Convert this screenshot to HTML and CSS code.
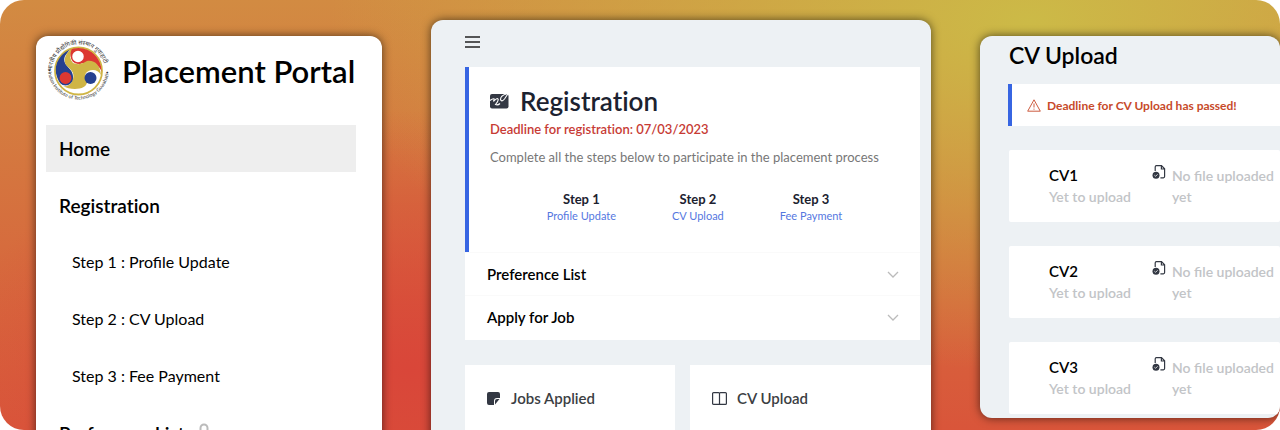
FILE: index.html
```html
<!DOCTYPE html>
<html lang="en">
<head>
<meta charset="utf-8">
<meta name="viewport" content="width=device-width, initial-scale=1">
<title>Placement Portal</title>
<link rel="stylesheet" href="styles.css">
</head>
<body>
<svg class="defs" aria-hidden="true">
  <symbol id="chevron" viewBox="0 0 12 7"><path d="M1 1l5 5 5-5" fill="none" stroke="currentColor" stroke-width="1.3"/></symbol>
  <symbol id="file-done" viewBox="0 0 14 14">
    <path d="M3.2 6V1.9Q3.2.7 4.4.7H9.5L12.6 3.8V11.6Q12.6 12.8 11.4 12.8H8.4M9.4.9V4H12.5" fill="none" stroke="currentColor" stroke-width="1.2"/>
    <circle cx="4" cy="10.2" r="3.5" fill="currentColor"/>
    <path d="M2.4 10.2l1.2 1.1 2-2" fill="none" stroke="#fff" stroke-width=".8"/>
  </symbol>
</svg>
<main class="stage">
  <aside class="panel sidebar">
    <header class="brand">
      <svg class="crest" viewBox="0 0 64 64" role="img" aria-label="Indian Institute of Technology Guwahati">
        <defs>
          <clipPath id="disc"><circle cx="32.500" cy="32" r="23"/></clipPath>
          <path id="arc-top" d="M6 32A26.500 26.500 0 0 1 59 32"/>
          <path id="arc-bottom" d="M2 30A30.500 30.500 0 0 0 63 30"/>
        </defs>
        <circle cx="32.500" cy="32" r="23.500" fill="#fff" stroke="#cfb545" stroke-width="1.800"/>
        <g clip-path="url(#disc)">
          <path d="M25 9C12 13 7 27 11 38C14 47 27 48 27 38C27 28 15 27 19 17Z" fill="#25408f"/>
          <path d="M24 8C42 5 56 18 56 33C51 23 44 22 34 25C27 25 22 17 25 9Z" fill="#dc3832"/>
          <path d="M26 9C19 15 17 21 20 26C24 30 29 33 27 40C25 46 21 48 17 47C25 52 42 51 41 42C37 36 40 31 47 31Q52 31 55 36C54 26 49 21 41 22Q34 27 27 24Q22 19 26 9Z" fill="#cfb545"/>
        </g>
        <circle cx="32" cy="17.500" r="6.500" fill="#fff" stroke="#dc3832" stroke-width="1.500"/>
        <circle cx="19.500" cy="39" r="6.700" fill="#dc3832" stroke="#25408f" stroke-width="1.500"/>
        <circle cx="44.500" cy="39" r="6" fill="#25408f"/>
        <text class="crest-text hindi"><textPath href="#arc-top">भारतीय प्रौद्योगिकी संस्थान गुवाहाटी</textPath></text>
        <text class="crest-text"><textPath href="#arc-bottom">•Indian Institute of Technology Guwahati•</textPath></text>
      </svg>
      <h1>Placement Portal</h1>
    </header>
    <nav class="menu">
      <a class="item active" href="#home">Home</a>
      <a class="item" href="#registration">Registration</a>
      <a class="item sub" href="#step1">Step 1 : Profile Update</a>
      <a class="item sub" href="#step2">Step 2 : CV Upload</a>
      <a class="item sub" href="#step3">Step 3 : Fee Payment</a>
      <a class="item" href="#preferences">Preference List
        <svg class="lock" viewBox="0 0 16 22"><path d="M4.500 8V5a3.500 3.500 0 0 1 7 0V8" fill="none" stroke="currentColor" stroke-width="2"/><rect x="1" y="7" width="14" height="12" rx="1" fill="currentColor"/></svg>
      </a>
    </nav>
  </aside>

  <section class="panel dashboard">
    <button class="burger" type="button" aria-label="Menu"><svg viewBox="0 0 15 14"><path d="M0 2h15M0 7h15M0 12h15" stroke="currentColor" stroke-width="1.400"/></svg></button>
    <div class="process">
      <article class="registration">
        <h2><svg class="sign" viewBox="0 0 19 16"><rect x="0" y="1" width="18.500" height="14.500" rx="2" fill="#333843"/><path d="M0 7.500Q3 5 4.200 6L3.500 8.500Q7 4.500 8 6T5.500 11.500Q8 12.500 10 10.500M16.500 1Q10.500 2.500 10.500 6.500Q11.500 9.500 14.500 6L18.500 0" fill="none" stroke="#fff" stroke-width="1.100"/></svg>Registration</h2>
        <p class="deadline">Deadline for registration: 07/03/2023</p>
        <p class="hint">Complete all the steps below to participate in the placement process</p>
        <ul class="steps">
          <li><strong>Step 1</strong><a href="#step1">Profile Update</a></li>
          <li><strong>Step 2</strong><a href="#step2">CV Upload</a></li>
          <li><strong>Step 3</strong><a href="#step3">Fee Payment</a></li>
        </ul>
      </article>
      <button class="fold" type="button">Preference List<svg class="chevron"><use href="#chevron"/></svg></button>
      <button class="fold" type="button">Apply for Job<svg class="chevron"><use href="#chevron"/></svg></button>
    </div>
    <div class="tiles">
      <article class="tile"><svg class="note" viewBox="0 0 13 13"><path d="M2 0H11Q13 0 13 2V6H10Q7 6 7 9V13H2Q0 13 0 11V2Q0 0 2 0ZM8 12.500V9Q8 7 10 7H12.500Z" fill="#333843"/></svg>Jobs Applied</article>
      <article class="tile wide"><svg class="book" viewBox="0 0 15 13"><path d="M.6 1.600Q.6.6 1.600.6H6.500Q7.500.6 7.500 1.600V11.400Q7.500 12.400 6.500 12.400H1.600Q.6 12.400.6 11.400ZM7.500 1.600Q7.500.6 8.500.6H13.400Q14.400.6 14.400 1.600V11.400Q14.400 12.400 13.400 12.400H8.500Q7.500 12.400 7.500 11.400Z" fill="none" stroke="#333843" stroke-width="1.200"/></svg>CV Upload</article>
    </div>
  </section>

  <section class="panel uploads">
    <h2>CV Upload</h2>
    <p class="alert"><svg viewBox="0 0 14 13"><path d="M7 .8L13.300 12.200H.7ZM7 4.500V8.500M7 9.600V10.700" fill="none" stroke="currentColor" stroke-width=".9" stroke-linejoin="round"/></svg>Deadline for CV Upload has passed!</p>
    <ul class="files">
      <li class="cv"><div><h3>CV1</h3><p>Yet to upload</p></div><svg class="doc"><use href="#file-done"/></svg><p class="state">No file uploaded yet</p></li>
      <li class="cv"><div><h3>CV2</h3><p>Yet to upload</p></div><svg class="doc"><use href="#file-done"/></svg><p class="state">No file uploaded yet</p></li>
      <li class="cv"><div><h3>CV3</h3><p>Yet to upload</p></div><svg class="doc"><use href="#file-done"/></svg><p class="state">No file uploaded yet</p></li>
    </ul>
  </section>
</main>
</body>
</html>
```

FILE: styles.css
```css
* { box-sizing: border-box; }
body { margin: 0; background: #fff; color: #000; font-family: Lato, sans-serif; font-variant-ligatures: no-common-ligatures; }
h1, h2, h3, p, ul { margin: 0; padding: 0; }
ul { list-style: none; }
a { color: inherit; text-decoration: none; }
button { border: 0; background: none; padding: 0; font: inherit; color: inherit; text-align: left; }
svg { flex: none; }
.defs { display: none; }

.stage {
  display: grid;
  grid-template-columns: 346fr 500fr 300fr;
  column-gap: 49px;
  align-items: start;
  height: 100vh;
  padding: 20px 0 0 36px;
  overflow: hidden;
  border-radius: 24px;
  background:
    radial-gradient(ellipse 700px 350px at 1030px 20px, #ccba47, rgba(207, 170, 68, 0)),
    radial-gradient(ellipse 460px 260px at 410px 370px, #d94639, rgba(217, 70, 57, 0)),
    linear-gradient(#d28b42, #d9553a);
}
.panel { overflow: hidden; border-radius: 12px; background: #edf1f4; box-shadow: 0 0 10px rgba(0, 0, 0, .6); }

.sidebar { margin-top: 16px; background: #fff; padding: 3px 26px 12px 10px; }
.brand { display: flex; align-items: center; gap: 12px; margin-bottom: 22px; }
.crest { width: 64px; height: 64px; overflow: visible; }
.crest-text { font: 5px Lato, "Noto Sans", sans-serif; fill: #333; }
.crest-text.hindi { font-size: 6px; }
.brand h1 { font-size: 31px; line-height: 40px; font-weight: 600; white-space: nowrap; }
.menu { display: flex; flex-direction: column; gap: 10px; }
.item { display: flex; align-items: center; gap: 11px; height: 47px; padding: 0 13px; font-size: 19px; font-weight: 600; }
.item.active { background: #eee; }
.item.sub { padding: 0 26px 2px; font-size: 16px; font-weight: 400; }
.sub, .steps a, .state { font-variant-ligatures: normal; }
.lock { width: 16px; height: 22px; color: #bbb; }

.dashboard { padding: 15px 0 24px 34px; }
.burger { display: block; margin-bottom: 18px; color: #222; }
.burger svg { display: block; width: 15px; height: 14px; }
.process { margin-right: 11px; padding-bottom: 2px; background: #fff; }
.registration { padding: 18px 21px 28px; border-left: 4px solid #3765e2; color: #1c2230; }
.registration h2 { display: flex; align-items: center; gap: 11px; font-size: 26px; line-height: 32px; font-weight: 600; }
.sign { width: 19px; height: 16px; }
.deadline { color: #c73b35; font-size: 13px; line-height: 24px; font-weight: 600; }
.hint { margin-top: 4px; color: #777; font-size: 13px; line-height: 24px; }
.steps { display: flex; justify-content: center; gap: 56px; margin-top: 21px; }
.steps li { display: grid; justify-items: center; }
.steps strong { font-size: 13px; line-height: 18px; font-weight: 700; }
.steps a { color: #5577df; font-size: 11px; line-height: 16px; }
.fold { display: flex; width: 100%; height: 43px; align-items: center; justify-content: space-between; padding: 0 21px 0 22px; border-top: 1px solid #fafafa; font-size: 15px; font-weight: 600; }
.chevron { width: 12px; height: 7px; color: #bbb; }
.tiles { display: grid; grid-template-columns: 210fr 241fr; column-gap: 15px; margin-top: 25px; }
.tile { display: flex; height: 66px; align-items: center; gap: 11px; padding: 0 22px; background: #fff; color: #3b3e43; font-size: 15px; font-weight: 600; }
.tile.wide { gap: 10px; }
.note { width: 13px; height: 13px; }
.book { width: 15px; height: 13px; }

.uploads { margin-top: 16px; padding: 3px 0 4px 28px; }
.uploads h2 { margin-left: 1px; font-size: 23px; line-height: 32px; font-weight: 600; }
.alert { display: flex; height: 42px; align-items: center; gap: 6px; margin-top: 13px; padding-left: 15px; border-left: 4px solid #3765e2; background: #fff; color: #c74a2a; font-size: 12px; font-weight: 700; white-space: nowrap; }
.alert svg { width: 14px; height: 13px; }
.files { display: grid; gap: 24px; margin-top: 24px; }
.cv { display: grid; grid-template-columns: 103px 14px 1fr; align-items: start; height: 72px; margin-left: 1px; padding: 15px 0 0 40px; border-radius: 2px; background: #fff; color: #c2c4c7; font-size: 14px; line-height: 21px; font-weight: 600; }
.cv h3 { color: #000; font-size: 15px; line-height: 21px; font-weight: 600; }
.doc { width: 14px; height: 14px; color: #333843; }
.state { margin-left: 6px; }
```
